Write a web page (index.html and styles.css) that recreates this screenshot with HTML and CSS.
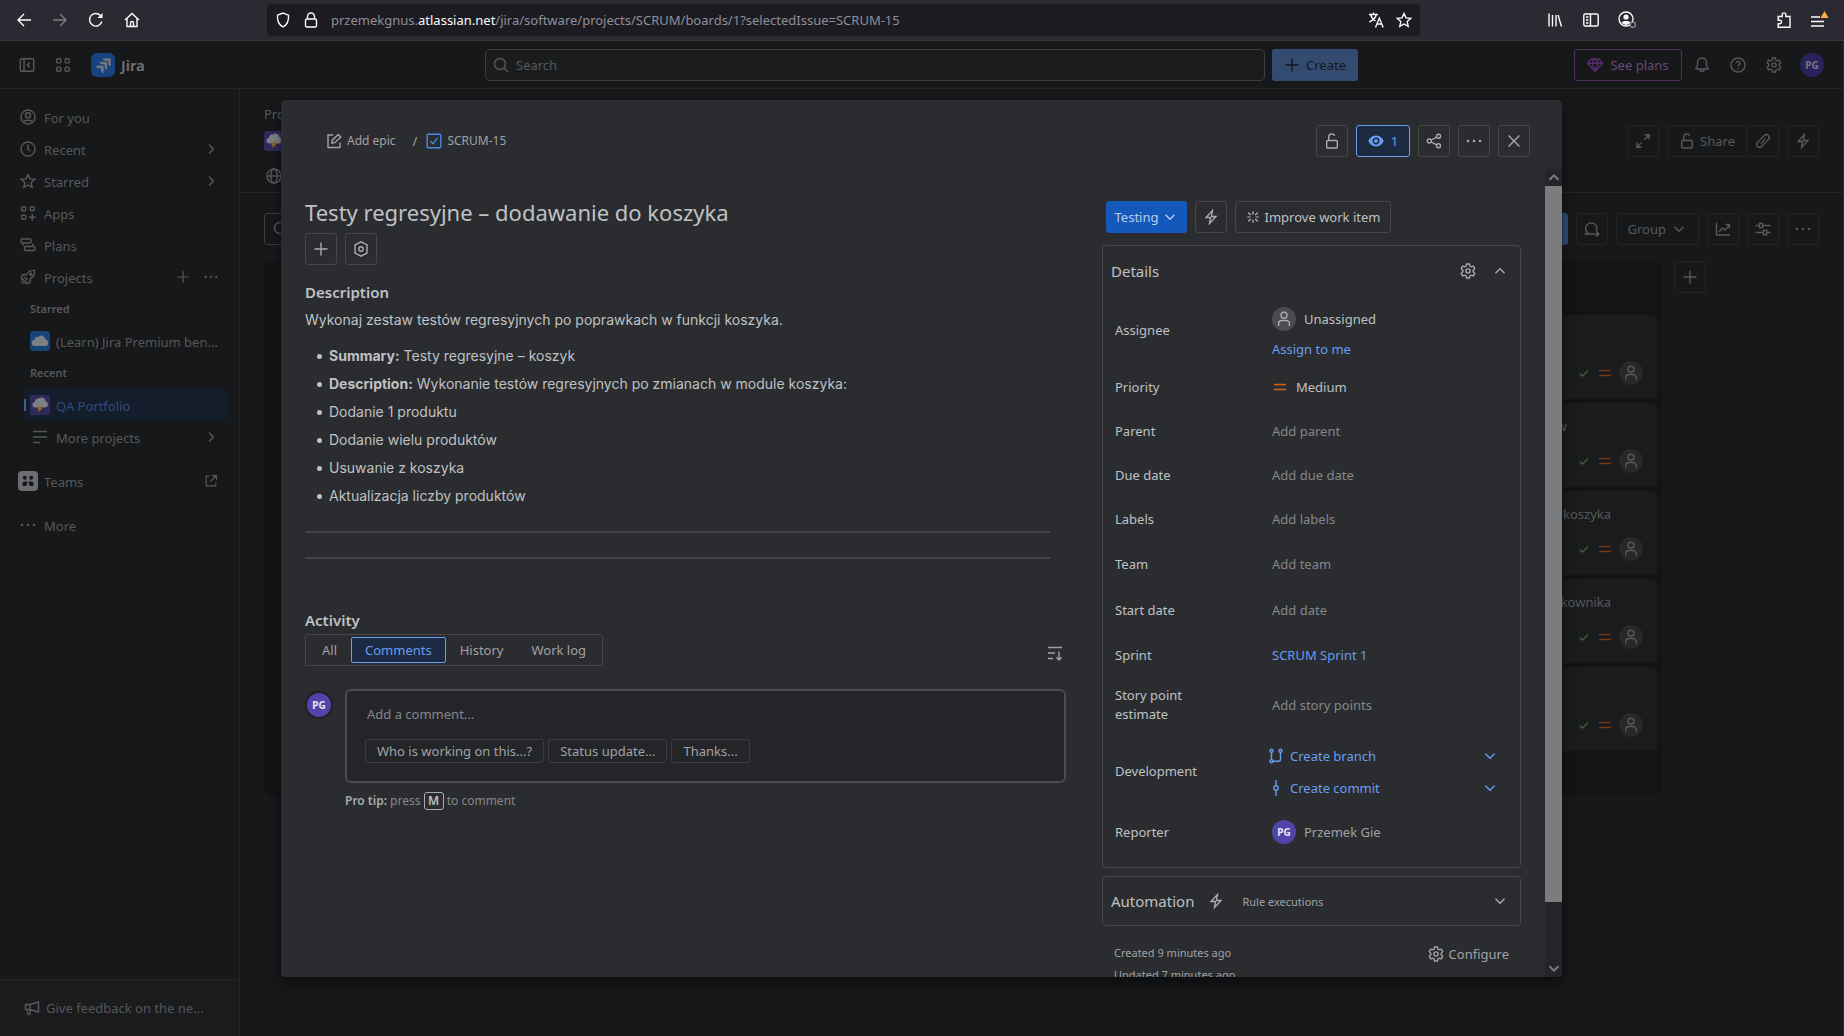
FILE: index.html
```html
<!DOCTYPE html>
<html lang="pl">
<head>
<meta charset="utf-8">
<title>SCRUM-15 - Jira</title>
<link rel="stylesheet" href="styles.css">
</head>
<body>
<svg class="sprite" aria-hidden="true">
  <symbol id="back" viewBox="0 0 16 16"><path d="M15 8H2M8 2 2 8l6 6"/></symbol>
  <symbol id="forward" viewBox="0 0 16 16"><path d="M1 8h13M8 2l6 6-6 6"/></symbol>
  <symbol id="reload" viewBox="0 0 16 16"><path d="M13.9 9.500A6.300 6.300 0 1 1 12.500 3.500"/><path d="M9.500 6h5V1z" fill="currentColor" stroke="none"/></symbol>
  <symbol id="house" viewBox="0 0 16 16"><path d="M1 8l7-6.500L15 8M3 6.500V14.500h10V6.500M6.500 14.500v-3.500a1.500 1.500 0 0 1 3 0v3.500"/></symbol>
  <symbol id="shield" viewBox="0 0 16 16"><path d="M8 1 2.500 3.200C2 9 4.500 13 8 15c3.500-2 6-6 5.500-11.800z"/></symbol>
  <symbol id="padlock" viewBox="0 0 16 16"><rect x="2.500" y="7" width="11" height="8" rx="1.500"/><path d="M4.500 7V4.500a3.500 3.500 0 0 1 7 0V7"/></symbol>
  <symbol id="translate" viewBox="0 0 16 16"><path d="M1 2.500h9M5.500 .5v2M2.500 2.500c.8 3 3 5.200 5 6.500M8.500 2.500C7.500 6 4.500 8.500 1.500 10M7.500 15.500 11.300 6l3.900 9.500M9 12h4.800"/></symbol>
  <symbol id="star" viewBox="0 0 16 16"><path d="m8 1.500 2 4.400 4.800.5-3.600 3.200 1 4.800L8 12l-4.200 2.400 1-4.800L1.200 6.400 6 5.900z"/></symbol>
  <symbol id="library" viewBox="0 0 16 16"><path d="M2 1.500v13M5.500 3v11.500M9 3v11.500M11 3l3.500 11.500"/></symbol>
  <symbol id="sidebars" viewBox="0 0 16 16"><rect x=".8" y="2" width="14.400" height="12" rx="1.500"/><path d="M7.500 2v12M3 5h2.500M3 8h2.500M3 11h2.500"/></symbol>
  <symbol id="account" viewBox="0 0 18 18"><circle cx="8" cy="8" r="7"/><circle cx="8" cy="6" r="2.600" fill="currentColor" stroke="none"/><path d="M3.500 11.800c.8-2.400 8.200-2.400 9 0A6 6 0 0 1 8 14a6 6 0 0 1-4.500-2.200z" fill="currentColor" stroke="none"/><circle cx="14.800" cy="13.800" r="2.600" fill="#2b2a33" stroke="#8f8f9d" stroke-width="1.200"/></symbol>
  <symbol id="puzzle" viewBox="0 0 16 16"><path d="M6.200 4.500V2.700a1.800 1.800 0 0 1 3.600 0v1.800H14v10.700H2.200v-3.400h1.500a1.800 1.800 0 0 0 0-3.600H2.200V4.500z"/></symbol>
  <symbol id="appmenu" viewBox="0 0 20 20"><path d="M1 7h9M1 11.500h13M1 16h13"/><path d="m14.500 1 4 7h-8z" fill="#ffb13d" stroke="none"/></symbol>
  <symbol id="collapse" viewBox="0 0 16 16"><rect x="1.300" y="1.800" width="13.400" height="12.400" rx="1"/><path d="M5 2v12M10.800 5.500 8.500 8l2.300 2.500"/></symbol>
  <symbol id="grid" viewBox="0 0 16 16"><rect x="1.700" y="1.700" width="4.200" height="4.200" rx="1.200"/><rect x="10.100" y="1.700" width="4.200" height="4.200" rx="1.200"/><rect x="1.700" y="10.100" width="4.200" height="4.200" rx="1.200"/><rect x="10.100" y="10.100" width="4.200" height="4.200" rx="1.200"/></symbol>
  <symbol id="apps" viewBox="0 0 16 16"><rect x="1.700" y="1.700" width="4" height="4" rx="1"/><rect x="10.300" y="1.700" width="4" height="4" rx="1"/><rect x="1.700" y="10.300" width="4" height="4" rx="1"/><path d="M12.300 9v6.500M9 12.300h6.500"/></symbol>
  <symbol id="jira" viewBox="0 0 24 24"><rect width="24" height="24" rx="6" fill="#17427f"/><path d="M11.500 5H20v8.500a3.200 3.200 0 0 1-3.200-3.200V8.200h-2.100A3.200 3.200 0 0 1 11.500 5zM8 8.600h8.400v8.400a3.200 3.200 0 0 1-3.200-3.200v-2.100h-2A3.200 3.200 0 0 1 8 8.600zM4.500 12.200h8.400v8.300a3.200 3.200 0 0 1-3.200-3.200v-1.900h-2a3.200 3.200 0 0 1-3.200-3.200z" fill="#75797e" stroke="#17427f" stroke-width=".7"/></symbol>
  <symbol id="search" viewBox="0 0 16 16"><circle cx="7" cy="7" r="5.500"/><path d="m11 11 4 4"/></symbol>
  <symbol id="plus" viewBox="0 0 16 16"><path d="M8 1.500v13M1.500 8h13"/></symbol>
  <symbol id="gem" viewBox="0 0 16 16"><path d="M4 2h8l3.500 4.200L8 14.500.5 6.200zM.5 6.200h15M5 6.200 8 14l3-7.800L9.500 2.500h-3z"/></symbol>
  <symbol id="bell" viewBox="0 0 16 16"><path d="M2 12v-.8L3.500 9V5.500a4.500 4.500 0 0 1 9 0V9l1.500 2.200v.8zM6 12.500a2 2 0 0 0 4 0"/></symbol>
  <symbol id="help" viewBox="0 0 16 16"><circle cx="8" cy="8" r="7"/><path d="M6 6.300a2 2 0 1 1 2.800 1.900c-.6.300-.8.600-.8 1.300"/><circle cx="8" cy="11.600" r=".9" fill="currentColor" stroke="none"/></symbol>
  <symbol id="gear" viewBox="0 0 16 16"><path d="M6.600 1h2.800l.5 2 1.400.8 2-.6 1.400 2.500L13.200 7.200v1.600l1.500 1.500-1.400 2.500-2-.6-1.400.8-.5 2H6.600l-.5-2-1.400-.8-2 .6-1.400-2.500 1.500-1.500V7.200L1.300 5.700l1.400-2.500 2 .6 1.400-.8z"/><circle cx="8" cy="8" r="2.100"/></symbol>
  <symbol id="person-circle" viewBox="0 0 16 16"><circle cx="8" cy="8" r="7"/><circle cx="8" cy="6.300" r="2.500"/><path d="M3.800 13.200c.2-2.700 8.200-2.700 8.400 0"/></symbol>
  <symbol id="clock" viewBox="0 0 16 16"><circle cx="8" cy="8" r="7"/><path d="M8 3.500v5l2.500 1.500"/></symbol>
  <symbol id="plans" viewBox="0 0 16 16"><rect x="1" y="2" width="10" height="4" rx="1"/><rect x="4.500" y="9.500" width="10.500" height="4" rx="1"/><path d="M3 6v2.500M13 6.500v3"/></symbol>
  <symbol id="rocket" viewBox="0 0 16 16"><path d="M14.500 1.500c-4-.5-6.500 1.500-8 4L2.500 6 1.300 8.500l6.200 6.200L10 13.500l.5-4c2.500-1.500 4.500-4 4-8zM4.500 8l3.500 3.500M1.500 14.500l3-3M1 11.500l1.500-1.500M4.500 15 6 13.500"/><circle cx="10.800" cy="5.200" r="1"/></symbol>
  <symbol id="dots" viewBox="0 0 16 16"><g fill="currentColor" stroke="none"><circle cx="2" cy="8" r="1.300"/><circle cx="8" cy="8" r="1.300"/><circle cx="14" cy="8" r="1.300"/></g></symbol>
  <symbol id="right" viewBox="0 0 16 16"><path d="m6 3.500 4.300 4.500L6 12.500"/></symbol>
  <symbol id="down" viewBox="0 0 16 16"><path d="m3.500 5.800 4.500 4.400 4.500-4.400"/></symbol>
  <symbol id="up" viewBox="0 0 16 16"><path d="m3.500 10.200 4.500-4.400 4.500 4.400"/></symbol>
  <symbol id="cloud" viewBox="0 0 20 20"><rect width="20" height="20" rx="3" fill="#174377"/><path d="M5 15a3 3 0 0 1-.6-6 3.200 3.200 0 0 1 4-3 4 4 0 0 1 7 2.500A3.300 3.300 0 0 1 15.500 15z" fill="#7d8186" stroke="none"/><path d="M9 11.500c.6 1 1.600 1 2.200 0z" fill="#99423c" stroke="none"/></symbol>
  <symbol id="storm" viewBox="0 0 20 20"><rect width="20" height="20" rx="3" fill="#302a5c"/><path d="M5.500 12.500a2.800 2.800 0 0 1-.5-5.600 3 3 0 0 1 3.800-3.300 4 4 0 0 1 6.700 2.600 3.200 3.200 0 0 1-.5 6.300z" fill="#7d8086" stroke="none"/><path d="m10 10.500-3 4h2.200L8 17.500l4.500-4.300h-2.300l2-2.700z" fill="#9c6c10" stroke="none"/></symbol>
  <symbol id="lines" viewBox="0 0 16 16"><path d="M1 2.500h14M1 8h14M1 13.500h7"/></symbol>
  <symbol id="teams" viewBox="0 0 20 20"><rect width="20" height="20" rx="4" fill="#6b6d70"/><g fill="#161819" stroke="none"><circle cx="6.800" cy="6.700" r="2"/><circle cx="13.200" cy="6.700" r="2"/><path d="M4.500 15v-2.500a2 2 0 0 1 2-2h2.700V13L8 15zM15.500 15v-2.500a2 2 0 0 0-2-2h-2.700V13L12 15z"/></g></symbol>
  <symbol id="external" viewBox="0 0 16 16"><path d="M6 2.500H2.500v11h11V10M9 1.800h5.200V7M14 2 7.500 8.500"/></symbol>
  <symbol id="megaphone" viewBox="0 0 16 16"><path d="M1.500 4.500H6L14.500 2v10L6 9.500H1.500zM6 4.500v5M3.500 9.500v3.500a1.300 1.300 0 0 0 2.600.5V9.500"/></symbol>
  <symbol id="globe" viewBox="0 0 16 16"><circle cx="8" cy="8" r="7"/><ellipse cx="8" cy="8" rx="3.200" ry="7"/><path d="M1 8h14"/></symbol>
  <symbol id="expand" viewBox="0 0 16 16"><path d="M9.500 1.800h4.700v4.700M14 2 9.500 6.500M6.500 14.200H1.800V9.500M2 14l4.500-4.500"/></symbol>
  <symbol id="unlock" viewBox="0 0 16 16"><rect x="2.700" y="7.500" width="10.600" height="7.500" rx="1"/><path d="M4.700 7.500V4.200a3.200 3.200 0 0 1 6.100-1.400"/></symbol>
  <symbol id="link" viewBox="0 0 16 16"><path d="M6 10.500 10.500 6M4.800 7.200 2.600 9.400a2.800 2.800 0 0 0 4 4l4.200-4.200M11.200 8.800l2.200-2.200a2.800 2.800 0 0 0-4-4L5.200 6.800"/></symbol>
  <symbol id="bolt" viewBox="0 0 16 16"><path d="M9.500 1.500 3 8.500h4.500l-1 6 6.500-7H8.500z"/></symbol>
  <symbol id="sprint" viewBox="0 0 16 16"><path d="M.5 13h14M12 10.200l2.800 2.800-2.800 2.800M5.500 13A5.700 5.700 0 1 1 12.500 10"/></symbol>
  <symbol id="chart" viewBox="0 0 16 16"><path d="M1.500 1.500v12.500H15M4 11l3.500-4 2.500 2 4.500-5M10.500 3.500h4v4"/></symbol>
  <symbol id="sliders" viewBox="0 0 16 16"><path d="M.5 4.500h4M7.500 4.500h8M.5 11.500h8M11.500 11.500h4"/><rect x="4.500" y="2.300" width="3" height="4.400"/><rect x="8.500" y="9.300" width="3.200" height="4.400"/></symbol>
  <symbol id="check" viewBox="0 0 16 16"><path d="m3 8.500 3.200 3L13 5"/></symbol>
  <symbol id="medium" viewBox="0 0 16 16"><path d="M2 5.500h12M2 10.500h12"/></symbol>
  <symbol id="person" viewBox="0 0 16 16"><circle cx="8" cy="4.200" r="3"/><path d="M2.700 15v-2.500a3 3 0 0 1 3-3h4.600a3 3 0 0 1 3 3V15"/></symbol>
  <symbol id="edit" viewBox="0 0 16 16"><path d="M7 2H2v12.500h12V9.500M5.800 10.200l.5-3 6-5.800 2.500 2.500-6 5.800z"/></symbol>
  <symbol id="task" viewBox="0 0 16 16"><rect x="1.200" y="1.200" width="13.600" height="13.600" rx="1"/><path d="m4.500 8.300 2.500 2.500 4.500-6"/></symbol>
  <symbol id="eye" viewBox="0 0 16 16"><path d="M8 2.500C4 2.500 1.500 5.500.3 8 1.500 10.500 4 13.500 8 13.500S14.500 10.500 15.700 8C14.500 5.500 12 2.500 8 2.500z" fill="currentColor" stroke="none"/><circle cx="8" cy="8" r="2.700" fill="none" stroke="#1c2b42" stroke-width="1.500"/></symbol>
  <symbol id="share" viewBox="0 0 16 16"><circle cx="12.500" cy="3.200" r="2"/><circle cx="3.300" cy="8" r="2"/><circle cx="12.500" cy="12.800" r="2"/><path d="m5.200 7 5.500-2.900M5.200 9l5.500 2.900"/></symbol>
  <symbol id="close" viewBox="0 0 16 16"><path d="m2.500 2.500 11 11M13.500 2.500l-11 11"/></symbol>
  <symbol id="hexagon" viewBox="0 0 16 16"><path d="m8 .8 6 3.200v8l-6 3.200L2 12V4z"/><circle cx="8" cy="8" r="2.200"/></symbol>
  <symbol id="spark" viewBox="0 0 16 16"><path d="M8 1.500v3.500M8 11v3.500M1.500 8H5M11 8h3.500M2.500 3 5.500 5.700M10.500 10.300l3 2.700M13.500 3l-3 2.700M5.500 10.300 2.500 13"/></symbol>
  <symbol id="sort" viewBox="0 0 16 16"><path d="M1 2.500h14M1 8h7M1 13.500h5M12 6.500v8.500M9.300 12.300 12 15l2.700-2.700"/></symbol>
  <symbol id="branch" viewBox="0 0 16 16"><circle cx="3.500" cy="2.800" r="1.500"/><circle cx="12.500" cy="2.800" r="1.500"/><circle cx="3.500" cy="13.200" r="1.500"/><path d="M3.500 4.500v7M12.500 4.500v6.700a2 2 0 0 1-2 2H5"/></symbol>
  <symbol id="commit" viewBox="0 0 16 16"><circle cx="8" cy="8" r="2.200"/><path d="M8 0v5.800M8 10.200V16"/></symbol>
</svg>

<header class="chrome">
  <div class="chrome-nav">
    <button aria-label="Back"><svg><use href="#back"/></svg></button>
    <button class="off" aria-label="Forward"><svg><use href="#forward"/></svg></button>
    <button aria-label="Reload"><svg><use href="#reload"/></svg></button>
    <button aria-label="Home"><svg><use href="#house"/></svg></button>
  </div>
  <div class="url">
    <svg><use href="#shield"/></svg><svg><use href="#padlock"/></svg>
    <span class="address">przemekgnus.<b>atlassian.net</b>/jira/software/projects/SCRUM/boards/1?selectedIssue=SCRUM-15</span>
    <svg><use href="#translate"/></svg><svg><use href="#star"/></svg>
  </div>
  <div class="chrome-tools">
    <button aria-label="Library"><svg><use href="#library"/></svg></button>
    <button aria-label="Sidebars"><svg><use href="#sidebars"/></svg></button>
    <button aria-label="Account"><svg class="mid"><use href="#account"/></svg></button>
    <button class="push" aria-label="Extensions"><svg><use href="#puzzle"/></svg></button>
    <button aria-label="Menu"><svg class="large"><use href="#appmenu"/></svg></button>
  </div>
</header>

<div class="app">
  <header class="topbar">
    <div class="brand">
      <svg><use href="#collapse"/></svg><svg><use href="#grid"/></svg>
      <a href="#jira"><svg class="logo"><use href="#jira"/></svg>Jira</a>
    </div>
    <div class="find">
      <label class="searchbox"><svg><use href="#search"/></svg><input type="search" placeholder="Search" aria-label="Search"></label>
      <button class="create"><svg><use href="#plus"/></svg>Create</button>
    </div>
    <div class="account">
      <button class="plans"><svg><use href="#gem"/></svg>See plans</button>
      <svg><use href="#bell"/></svg><svg><use href="#help"/></svg><svg><use href="#gear"/></svg>
      <span class="avatar dim">PG</span>
    </div>
  </header>

  <div class="body">
    <nav class="sidebar">
      <div class="menu">
        <a href="#you"><svg><use href="#person-circle"/></svg><span>For you</span></a>
        <a href="#recent"><svg><use href="#clock"/></svg><span>Recent</span><svg><use href="#right"/></svg></a>
        <a href="#starred"><svg><use href="#star"/></svg><span>Starred</span><svg><use href="#right"/></svg></a>
        <a href="#apps"><svg><use href="#apps"/></svg><span>Apps</span></a>
        <a href="#plans"><svg><use href="#plans"/></svg><span>Plans</span></a>
        <a href="#projects"><svg><use href="#rocket"/></svg><span>Projects</span><svg class="small"><use href="#plus"/></svg><svg class="small"><use href="#dots"/></svg></a>
        <div class="sub">
          <h3>Starred</h3>
          <a href="#learn"><svg class="tile"><use href="#cloud"/></svg><span>(Learn) Jira Premium ben...</span></a>
          <h3>Recent</h3>
          <a href="#qa" class="selected"><svg class="tile"><use href="#storm"/></svg><span>QA Portfolio</span></a>
          <a href="#more-projects"><svg class="inset"><use href="#lines"/></svg><span>More projects</span><svg><use href="#right"/></svg></a>
        </div>
        <a href="#teams" class="apart"><svg class="tile"><use href="#teams"/></svg><span>Teams</span><svg class="small"><use href="#external"/></svg></a>
        <a href="#more" class="apart"><svg><use href="#dots"/></svg><span>More</span></a>
      </div>
      <a class="feedback" href="#feedback"><svg><use href="#megaphone"/></svg><span>Give feedback on the ne...</span></a>
    </nav>

    <main class="project">
      <div class="project-head">
        <div class="crumbs">Projects</div>
        <div class="project-row">
          <svg class="tile"><use href="#storm"/></svg>
          <button class="ghost square push"><svg><use href="#expand"/></svg></button>
          <div class="split"><button class="ghost"><svg><use href="#unlock"/></svg>Share</button><button class="ghost square"><svg><use href="#link"/></svg></button></div>
          <button class="ghost square"><svg><use href="#bolt"/></svg></button>
        </div>
        <div class="tabs-row"><svg><use href="#globe"/></svg></div>
      </div>
      <div class="toolbar">
        <div class="board-search"><svg><use href="#search"/></svg></div>
        <button class="primary push" aria-label="Complete sprint"></button>
        <button class="ghost square"><svg><use href="#sprint"/></svg></button>
        <button class="ghost">Group<svg><use href="#down"/></svg></button>
        <button class="ghost square"><svg><use href="#chart"/></svg></button>
        <button class="ghost square"><svg><use href="#sliders"/></svg></button>
        <button class="ghost square"><svg><use href="#dots"/></svg></button>
      </div>
      <div class="board">
        <section class="lane"></section>
        <section class="lane"></section>
        <section class="lane"></section>
        <section class="lane"></section>
        <section class="lane">
          <article class="card"><p></p><div><svg class="done"><use href="#check"/></svg><svg class="prio"><use href="#medium"/></svg><span class="nobody"><svg><use href="#person"/></svg></span></div></article>
          <article class="card"><p class="short">w</p><div><svg class="done"><use href="#check"/></svg><svg class="prio"><use href="#medium"/></svg><span class="nobody"><svg><use href="#person"/></svg></span></div></article>
          <article class="card"><p>koszyka</p><div><svg class="done"><use href="#check"/></svg><svg class="prio"><use href="#medium"/></svg><span class="nobody"><svg><use href="#person"/></svg></span></div></article>
          <article class="card"><p>kownika</p><div><svg class="done"><use href="#check"/></svg><svg class="prio"><use href="#medium"/></svg><span class="nobody"><svg><use href="#person"/></svg></span></div></article>
          <article class="card"><p></p><div><svg class="done"><use href="#check"/></svg><svg class="prio"><use href="#medium"/></svg><span class="nobody"><svg><use href="#person"/></svg></span></div></article>
        </section>
        <button class="ghost square"><svg><use href="#plus"/></svg></button>
      </div>
    </main>
  </div>

  <div class="overlay">
    <div class="dialog" role="dialog" aria-labelledby="issue-title">
      <header class="dialog-head">
        <div class="path">
          <a href="#epic"><svg><use href="#edit"/></svg>Add epic</a>
          <span>/</span>
          <a href="#issue"><svg class="blue"><use href="#task"/></svg>SCRUM-15</a>
        </div>
        <div class="actions">
          <button class="outline square" aria-label="Restrict"><svg><use href="#unlock"/></svg></button>
          <button class="outline watch"><svg><use href="#eye"/></svg>1</button>
          <button class="outline square" aria-label="Share"><svg><use href="#share"/></svg></button>
          <button class="outline square" aria-label="Actions"><svg><use href="#dots"/></svg></button>
          <button class="outline square" aria-label="Close"><svg><use href="#close"/></svg></button>
        </div>
      </header>
      <div class="dialog-body">
        <div class="content">
          <h1 id="issue-title">Testy regresyjne – dodawanie do koszyka</h1>
          <div class="quick">
            <button class="outline square" aria-label="Add"><svg><use href="#plus"/></svg></button>
            <button class="outline square" aria-label="Apps"><svg><use href="#hexagon"/></svg></button>
          </div>
          <h2>Description</h2>
          <div class="prose">
            <p>Wykonaj zestaw testów regresyjnych po poprawkach w funkcji koszyka.</p>
            <ul>
              <li><strong>Summary:</strong> Testy regresyjne – koszyk</li>
              <li><strong>Description:</strong> Wykonanie testów regresyjnych po zmianach w module koszyka:</li>
              <li>Dodanie 1 produktu</li>
              <li>Dodanie wielu produktów</li>
              <li>Usuwanie z koszyka</li>
              <li>Aktualizacja liczby produktów</li>
            </ul>
            <hr><hr>
          </div>
          <h2 class="activity">Activity</h2>
          <div class="filter-row">
            <div class="filter"><button>All</button><button class="on">Comments</button><button>History</button><button>Work log</button></div>
            <svg><use href="#sort"/></svg>
          </div>
          <div class="comment">
            <span class="avatar ring">PG</span>
            <div class="composer">
              <input type="text" placeholder="Add a comment..." aria-label="Add a comment">
              <div class="chips"><button>Who is working on this...?</button><button>Status update...</button><button>Thanks...</button></div>
            </div>
            <p class="tip"><b>Pro tip:</b> press <kbd>M</kbd> to comment</p>
          </div>
        </div>

        <aside class="side">
          <div class="status">
            <button class="state">Testing<svg><use href="#down"/></svg></button>
            <button class="outline square" aria-label="Automation"><svg><use href="#bolt"/></svg></button>
            <button class="outline improve"><svg><use href="#spark"/></svg>Improve work item</button>
          </div>
          <section class="panel">
            <header><h2>Details</h2><svg><use href="#gear"/></svg><svg><use href="#up"/></svg></header>
            <dl>
              <div class="r-assignee"><dt>Assignee</dt><dd><span class="who"><span class="nobody lit"><svg><use href="#person"/></svg></span>Unassigned</span><a href="#assign">Assign to me</a></dd></div>
              <div><dt>Priority</dt><dd><span class="level"><svg><use href="#medium"/></svg>Medium</span></dd></div>
              <div><dt>Parent</dt><dd class="empty">Add parent</dd></div>
              <div><dt>Due date</dt><dd class="empty">Add due date</dd></div>
              <div><dt>Labels</dt><dd class="empty">Add labels</dd></div>
              <div class="tall"><dt>Team</dt><dd class="empty">Add team</dd></div>
              <div class="tall"><dt>Start date</dt><dd class="empty">Add date</dd></div>
              <div><dt>Sprint</dt><dd><a href="#sprint-1">SCRUM Sprint 1</a></dd></div>
              <div class="r-points"><dt>Story point estimate</dt><dd class="empty">Add story points</dd></div>
              <div class="r-dev"><dt>Development</dt><dd class="dev"><a href="#new-branch"><svg><use href="#branch"/></svg><span>Create branch</span><svg><use href="#down"/></svg></a><a href="#new-commit"><svg><use href="#commit"/></svg><span>Create commit</span><svg><use href="#down"/></svg></a></dd></div>
              <div><dt>Reporter</dt><dd><span class="who soft"><span class="avatar">PG</span>Przemek Gie</span></dd></div>
            </dl>
          </section>
          <section class="panel auto">
            <header><h2>Automation</h2><svg class="lead"><use href="#bolt"/></svg><small>Rule executions</small><svg class="push"><use href="#down"/></svg></header>
          </section>
          <footer><p>Created 9 minutes ago<br>Updated 7 minutes ago</p><button><svg><use href="#gear"/></svg>Configure</button></footer>
        </aside>

        <div class="scrollbar" aria-hidden="true"><svg><use href="#up"/></svg><div class="track"><div class="thumb"></div></div><svg><use href="#down"/></svg></div>
      </div>
    </div>
  </div>
</div>
</body>
</html>
```
FILE: styles.css
```css
:root {
  --page: #161819;
  --page-line: #232527;
  --dim: #56585b;
  --surface: #2b2c2f;
  --line: #45464a;
  --text: #bfc1c4;
  --soft: #a0a2a6;
  --faint: #85878b;
  --blue: #669df1;
}
* { box-sizing: border-box; }
body {
  margin: 0;
  height: 100vh;
  display: flex;
  flex-direction: column;
  overflow: hidden;
  background: var(--page);
  color: var(--text);
  font: 13px/20px "Noto Sans", "Open Sans", sans-serif;
}
h1, h2, h3, p, ul, dl, dd { margin: 0; padding: 0; }
a { color: inherit; text-decoration: none; }
button {
  display: inline-flex;
  align-items: center;
  justify-content: center;
  flex: none;
  margin: 0;
  padding: 0;
  border: 0;
  background: none;
  color: inherit;
  font: inherit;
  white-space: nowrap;
}
input {
  padding: 0;
  border: 0;
  outline: 0;
  background: none;
  color: inherit;
  font: inherit;
  min-width: 0;
}
svg {
  flex: none;
  width: 16px;
  height: 16px;
  fill: none;
  stroke: currentColor;
  stroke-width: 1.4;
}
.sprite { position: absolute; width: 0; height: 0; }
.push { margin-left: auto; }
svg.small { width: 14px; height: 14px; margin-right: 1px; }
svg.tile { width: 20px; height: 20px; stroke: none; }

/* Browser toolbar */
.chrome {
  flex: none;
  display: grid;
  grid-template-columns: 267px minmax(0, 1153fr) 424px;
  align-items: center;
  height: 41px;
  border-bottom: 1px solid #38383d;
  background: #2b2a33;
  color: #fbfbfe;
}
.chrome-nav { display: flex; padding-left: 6px; }
.chrome-nav button, .chrome-tools button { width: 36px; height: 32px; }
.off { color: #7e7d84; }
.url {
  display: flex;
  align-items: center;
  gap: 12px;
  height: 32px;
  padding: 0 8px;
  border-radius: 4px;
  background: #1c1b22;
}
.address { flex: 1; color: #8f8f98; line-height: 22px; white-space: nowrap; overflow: hidden; }
.address b { color: #fbfbfe; font-weight: 400; }
.chrome-tools { display: flex; padding: 0 6px 0 117px; }
svg.mid { width: 18px; height: 18px; }
svg.large { width: 20px; height: 20px; }

/* Application shell */
.app {
  position: relative;
  flex: 1;
  display: flex;
  flex-direction: column;
  min-height: 0;
  border-right: 1px solid #3a2419;
  color: var(--dim);
}
.topbar {
  flex: none;
  display: grid;
  grid-template-columns: 1fr minmax(0, 873px) 1fr;
  align-items: center;
  height: 48px;
  padding: 0 19px;
  border-bottom: 1px solid var(--page-line);
}
.brand { display: flex; align-items: center; gap: 20px; }
.brand a { display: flex; align-items: center; gap: 6px; color: #717376; font-size: 15px; font-weight: 600; }
svg.logo { width: 24px; height: 24px; stroke: none; }
.find { display: flex; gap: 7px; }
.searchbox {
  flex: 1;
  display: flex;
  align-items: center;
  gap: 7px;
  height: 32px;
  padding: 0 7px;
  border: 1px solid #3b3d40;
  border-radius: 5px;
  background: #1a1c1d;
}
.searchbox input { flex: 1; }
input::placeholder { color: inherit; opacity: 1; }
.create {
  gap: 6px;
  width: 86px;
  height: 32px;
  border-radius: 3px;
  background: #334b71;
  color: #14191f;
}
.account { display: flex; align-items: center; justify-content: flex-end; gap: 20px; }
.plans {
  gap: 7px;
  width: 108px;
  height: 32px;
  margin-right: -8px;
  border: 1px solid #4f2b61;
  border-radius: 3px;
  color: #684b78;
}
.plans svg { color: #582b6e; }
.avatar {
  display: inline-flex;
  align-items: center;
  justify-content: center;
  flex: none;
  width: 24px;
  height: 24px;
  border-radius: 50%;
  background: #5243aa;
  color: #e8e8ee;
  font-size: 10px;
  font-weight: 700;
}
.avatar.dim { margin-left: -2px; background: #29225a; color: #77777f; }

.body { flex: 1; display: flex; min-height: 0; }
.sidebar {
  flex: none;
  display: flex;
  flex-direction: column;
  width: 240px;
  border-right: 1px solid var(--page-line);
}
.menu { flex: 1; padding: 12px; overflow: hidden; }
.menu a {
  display: flex;
  align-items: center;
  gap: 8px;
  height: 32px;
  padding: 0 8px;
  border-radius: 4px;
  white-space: nowrap;
}
.menu a span { flex: 1; overflow: hidden; padding-top: 1px; }
.menu a svg + svg { margin-left: 5px; }
.sub { padding-left: 12px; }
.sub h3 { padding-left: 6px; font-size: 11px; line-height: 32px; font-weight: 600; }
.sub a { gap: 6px; padding-left: 6px; }
svg.inset { margin: 0 2px; }
.menu .selected { position: relative; background: #131d2b; color: #32497a; }
.selected::before {
  content: "";
  position: absolute;
  left: 0;
  top: 10px;
  width: 2px;
  height: 12px;
  background: #405f94;
}
.menu .apart { margin-top: 12px; }
.apart .tile { margin: 0 -2px; }
.feedback {
  display: flex;
  align-items: center;
  gap: 6px;
  height: 57px;
  padding: 0 24px;
  border-top: 1px solid var(--page-line);
  background: #1a1b1c;
  white-space: nowrap;
}

/* Board behind the dialog */
.project { flex: 1; min-width: 0; display: flex; flex-direction: column; }
.project-head { height: 104px; padding: 12px 24px 0; border-bottom: 1px solid var(--page-line); }
.crumbs { line-height: 26px; height: 24px; }
.project-row { display: flex; align-items: center; gap: 8px; height: 32px; }
.project-head .tabs-row { display: flex; align-items: center; height: 38px; padding-left: 2px; }
.ghost {
  gap: 5px;
  height: 32px;
  padding: 0 11px;
  border: 1px solid #222426;
  border-radius: 3px;
}
.ghost.square, .outline.square { width: 32px; padding: 0; }
.split { display: flex; }
.split .ghost + .ghost { border-left: 0; }
.toolbar { display: flex; gap: 8px; padding: 20px 24px 16px; }
.board-search {
  display: flex;
  align-items: center;
  width: 160px;
  height: 32px;
  padding: 0 8px;
  border: 1px solid #3b3d40;
  border-radius: 3px;
}
.primary { width: 100px; height: 32px; border-radius: 3px; background: #2f4a74; }
.board { display: flex; align-items: flex-start; gap: 8px; padding-left: 24px; margin-right: 137px; }
.board > .ghost { margin: 0 0 0 4px; }
.lane { flex: 1; height: 535px; padding: 54px 5px 0; border-radius: 8px; background: #131415; }
.card {
  display: flex;
  flex-direction: column;
  justify-content: space-between;
  height: 84px;
  margin-bottom: 4px;
  padding: 13px 14px 14px;
  border-radius: 4px;
  background: #191b1c;
}
.card p { padding-right: 32px; text-align: right; }
.card p.short { padding-right: 76px; }
.card div { display: flex; align-items: center; justify-content: flex-end; gap: 6px; }
.done { width: 14px; height: 16px; color: #4a6133; }
.prio { color: #6e3b15; }
.nobody {
  display: inline-flex;
  align-items: center;
  justify-content: center;
  width: 24px;
  height: 24px;
  border-radius: 50%;
  background: #27282a;
}
.nobody.lit { background: #4b4c50; color: #a9abaf; }

/* Issue dialog */
.overlay {
  position: absolute;
  inset: 0;
  display: flex;
  justify-content: center;
  padding: 59px 24px;
}
.dialog {
  width: 1281px;
  display: flex;
  flex-direction: column;
  overflow: hidden;
  border-radius: 4px;
  background: var(--surface);
  box-shadow: 0 0 1px #000, 0 8px 14px rgba(0, 0, 0, .4);
  color: var(--text);
}
.dialog-head {
  flex: none;
  display: flex;
  align-items: flex-start;
  justify-content: space-between;
  height: 69px;
  padding: 25px 32px 0 45px;
}
.path { display: flex; align-items: center; gap: 9px; height: 32px; color: var(--soft); font-size: 12px; }
.path a { display: flex; align-items: center; gap: 5px; }
.path span { padding-left: 8px; font-size: 13px; }
.blue { color: #4688ec; }
.actions, .quick { display: flex; gap: 8px; }
.outline {
  height: 32px;
  border: 1px solid var(--line);
  border-radius: 3px;
  color: #a9abaf;
}
.watch { gap: 7px; width: 54px; border-color: var(--blue); background: #1c2b42; color: var(--blue); }
.dialog-body { flex: 1; display: flex; min-height: 0; }
.content { flex: 1; min-width: 0; padding: 27px 36px 0 24px; }
h1 { font-size: 22px; line-height: 32px; font-weight: 400; }
.quick { margin: 5px 0 15px; }
h2 { font-size: 15px; line-height: 24px; font-weight: 600; }
.prose { padding-right: 16px; font: 14px/24px Inter, sans-serif; }
.prose p { margin: 4px 0 12px; }
.prose ul { padding-left: 12px; list-style: none; }
.prose li { margin-bottom: 4px; }
.prose li::before {
  content: "";
  display: inline-block;
  width: 5px;
  height: 5px;
  margin-right: 7px;
  border-radius: 50%;
  background: currentColor;
  vertical-align: 2px;
}
.prose hr { height: 2px; margin: 0 0 24px; border: 0; background: #434448; }
.prose ul + hr { margin-top: 23px; }
.content .activity { margin-top: 49px; }
.filter-row {
  display: flex;
  align-items: flex-end;
  justify-content: space-between;
  margin-top: 2px;
  padding-right: 3px;
  color: var(--soft);
}
.filter-row svg { margin-bottom: 5px; }
.filter { display: flex; align-items: center; height: 32px; padding: 2px; border: 1px solid var(--line); border-radius: 3px; }
.filter button { height: 26px; padding: 0 14px; }
.filter .on { border: 1px solid var(--blue); border-radius: 2px; padding: 0 13px; background: #1c2b42; color: var(--blue); }
.comment { display: grid; grid-template-columns: 40px 1fr; margin-top: 23px; }
.ring { margin: 4px 0 0 2px; box-shadow: 0 0 0 2px #1f2023; }
.composer {
  height: 94px;
  padding: 13px 18px;
  border: 2px solid #4b4c50;
  border-radius: 6px;
  background: #242528;
}
.composer input { display: block; width: 100%; height: 20px; padding-left: 2px; color: var(--faint); }
.chips { display: flex; gap: 4px; margin-top: 15px; color: var(--soft); }
.chips button { height: 24px; padding: 0 11px; border: 1px solid #3c3d41; border-radius: 3px; }
.tip { grid-column: 2; padding-top: 8px; color: var(--faint); font-size: 12px; }
.tip b { color: #a9abaf; font-weight: 600; }
kbd {
  display: inline-block;
  width: 20px;
  border: 1px solid #a9abaf;
  border-radius: 3px;
  color: var(--text);
  font: 600 12px/16px "Noto Sans", sans-serif;
  text-align: center;
}

.side { flex: none; width: 419px; padding-top: 32px; }
.status { display: flex; gap: 8px; padding: 0 4px 12px; }
.state { gap: 4px; width: 81px; height: 32px; border-radius: 3px; background: #1558bc; color: #b9cdec; }
.improve { gap: 5px; width: 156px; color: var(--text); }
.improve svg { width: 14px; height: 14px; }
.panel { border: 1px solid var(--line); border-radius: 4px; }
.panel header { display: flex; align-items: center; gap: 16px; height: 50px; padding: 0 12px 0 8px; }
.panel header h2 { font-weight: 400; }
.panel header h2 + svg:not(.lead) { margin-left: auto; }
.panel header small { font-size: 11px; color: var(--soft); margin-left: 2px; padding-top: 2px; }
.panel svg { color: #a9abaf; }
.panel header svg.lead { margin-left: -2px; }
.panel dl { padding: 0 0 13px 12px; }
.panel dl > div {
  display: grid;
  grid-template-columns: 104px 1fr;
  column-gap: 53px;
  align-items: center;
  min-height: 44px;
}
.panel dt { line-height: 19px; }
.panel dd a, .panel dd a svg { color: var(--blue); }
.panel dl > .r-assignee { min-height: 69px; }
.panel dl > .tall { min-height: 46px; }
.panel dl > .r-points { min-height: 56px; }
.panel dl > .r-dev { min-height: 77px; }
.r-assignee dd { display: grid; gap: 8px; padding-top: 4px; }
.who, .level { display: flex; align-items: center; gap: 8px; }
.panel .level svg { color: #d06a12; }
.soft { color: var(--soft); }
.empty { color: var(--faint); }
.dev a { display: flex; align-items: center; gap: 6px; height: 32px; padding-right: 22px; margin-left: -4px; }
.dev span { flex: 1; }
.auto { margin-top: 8px; }
.auto header { height: 48px; }
.side footer { display: flex; align-items: flex-start; justify-content: space-between; padding: 16px 12px 0; color: var(--soft); }
.side footer p { font-size: 11px; line-height: 22px; }
.side footer button { gap: 5px; height: 24px; }
.scrollbar { flex: none; display: flex; flex-direction: column; align-items: center; width: 17px; margin-left: 24px; background: #242528; color: #7a7b7e; }
.scrollbar svg { height: 17px; stroke-width: 2; }
.track { flex: 1; width: 100%; display: grid; grid-template-rows: 37fr 3fr; }
.thumb { background: #7b7c7e; }
```
